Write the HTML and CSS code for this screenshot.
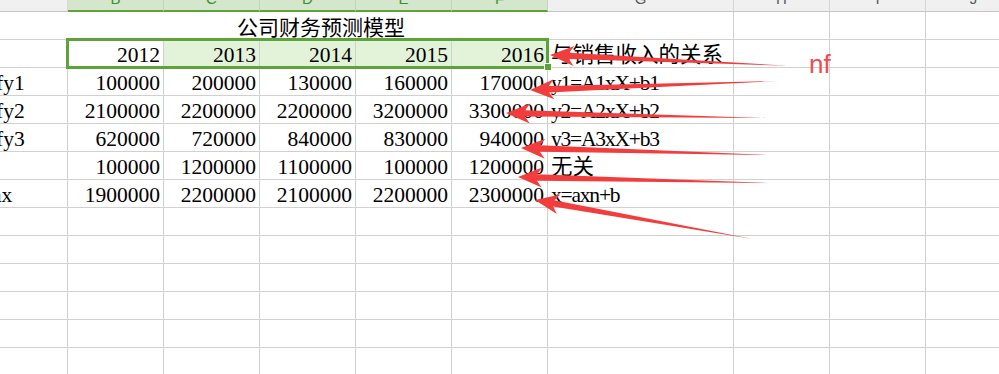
FILE: index.html
```html
<!DOCTYPE html>
<html lang="zh">
<head>
<meta charset="utf-8">
<title>公司财务预测模型</title>
<link rel="stylesheet" href="styles.css">
</head>
<body>
<div class="sheet">
  <div class="grid">
    <div class="hd"></div>
    <div class="hd on"><span>B</span></div>
    <div class="hd on"><span>C</span></div>
    <div class="hd on"><span>D</span></div>
    <div class="hd on"><span>E</span></div>
    <div class="hd on"><span>F</span></div>
    <div class="hd"><span>G</span></div>
    <div class="hd"><span>H</span></div>
    <div class="hd"><span>I</span></div>
    <div class="hd"><span>J</span></div>

    <div class="c title">公司财务预测模型</div>
    <div class="c"></div><div class="c"></div><div class="c"></div>

    <div class="c lab"></div>
    <div class="c num">2012</div>
    <div class="c num hl">2013</div>
    <div class="c num hl">2014</div>
    <div class="c num hl">2015</div>
    <div class="c num hl">2016</div>
    <div class="c txt">与销售收入的关系</div>
    <div class="c"></div><div class="c"></div><div class="c"></div>

    <div class="c lab"><span class="l1">fy1</span></div>
    <div class="c num">100000</div>
    <div class="c num">200000</div>
    <div class="c num">130000</div>
    <div class="c num">160000</div>
    <div class="c num">170000</div>
    <div class="c txt formula">y1=A1xX+b1</div>
    <div class="c"></div><div class="c"></div><div class="c"></div>

    <div class="c lab"><span class="l1">fy2</span></div>
    <div class="c num">2100000</div>
    <div class="c num">2200000</div>
    <div class="c num">2200000</div>
    <div class="c num">3200000</div>
    <div class="c num">3300000</div>
    <div class="c txt formula">y2=A2xX+b2</div>
    <div class="c"></div><div class="c"></div><div class="c"></div>

    <div class="c lab"><span class="l1">fy3</span></div>
    <div class="c num">620000</div>
    <div class="c num">720000</div>
    <div class="c num">840000</div>
    <div class="c num">830000</div>
    <div class="c num">940000</div>
    <div class="c txt formula">y3=A3xX+b3</div>
    <div class="c"></div><div class="c"></div><div class="c"></div>

    <div class="c lab"><span class="l2">目</span></div>
    <div class="c num">100000</div>
    <div class="c num">1200000</div>
    <div class="c num">1100000</div>
    <div class="c num">100000</div>
    <div class="c num">1200000</div>
    <div class="c txt">无关</div>
    <div class="c"></div><div class="c"></div><div class="c"></div>

    <div class="c lab"><span class="l3">ax</span></div>
    <div class="c num">1900000</div>
    <div class="c num">2200000</div>
    <div class="c num">2100000</div>
    <div class="c num">2200000</div>
    <div class="c num">2300000</div>
    <div class="c txt formula">x=axn+b</div>
    <div class="c"></div><div class="c"></div><div class="c"></div>

    <div class="c"></div><div class="c"></div><div class="c"></div><div class="c"></div><div class="c"></div><div class="c"></div><div class="c"></div><div class="c"></div><div class="c"></div><div class="c"></div>
    <div class="c"></div><div class="c"></div><div class="c"></div><div class="c"></div><div class="c"></div><div class="c"></div><div class="c"></div><div class="c"></div><div class="c"></div><div class="c"></div>
    <div class="c"></div><div class="c"></div><div class="c"></div><div class="c"></div><div class="c"></div><div class="c"></div><div class="c"></div><div class="c"></div><div class="c"></div><div class="c"></div>
    <div class="c"></div><div class="c"></div><div class="c"></div><div class="c"></div><div class="c"></div><div class="c"></div><div class="c"></div><div class="c"></div><div class="c"></div><div class="c"></div>
    <div class="c"></div><div class="c"></div><div class="c"></div><div class="c"></div><div class="c"></div><div class="c"></div><div class="c"></div><div class="c"></div><div class="c"></div><div class="c"></div>
    <div class="c"></div><div class="c"></div><div class="c"></div><div class="c"></div><div class="c"></div><div class="c"></div><div class="c"></div><div class="c"></div><div class="c"></div><div class="c"></div>
  </div>

  <div class="selbox"><span class="handle"></span></div>

  <svg class="arrows" width="999" height="374" viewBox="0 0 999 374">
    <g fill="#f33d3d">
      <polygon transform="translate(550,55) rotate(2.6)" points="0,0 24,-10 19,-3.2 238,0 19,3.2 24,10"/>
      <polygon transform="translate(530,90) rotate(-2.07)" points="0,0 24,-10 19,-3.2 249,0 19,3.2 24,10"/>
      <polygon transform="translate(506,113) rotate(1.10)" points="0,0 24,-10 19,-3.2 261,0 19,3.2 24,10"/>
      <polygon transform="translate(521,148) rotate(1.62)" points="0,0 24,-10 19,-3.2 247,0 19,3.2 24,10"/>
      <polygon transform="translate(518,177) rotate(1.37)" points="0,0 24,-10 19,-3.2 250,0 19,3.2 24,10"/>
      <polygon transform="translate(535,200) rotate(10.14)" points="0,0 24,-10 19,-3.2 221,0 19,3.2 24,10"/>
    </g>
  </svg>

  <div class="note">nf</div>
</div>
</body>
</html>
```

FILE: styles.css
```css
html, body {
  margin: 0;
  padding: 0;
  background: #ffffff;
  overflow: hidden;
}

.sheet {
  position: relative;
  width: 999px;
  height: 374px;
  overflow: hidden;
  font-family: "Liberation Serif", "Noto Sans CJK SC", serif;
  font-size: 21.5px;
  color: #000;
}

.grid {
  display: grid;
  grid-template-columns: 68px repeat(5, 96px) 186px 96px 96px 96px;
  grid-template-rows: 12px;
  grid-auto-rows: 28px;
}

.hd {
  box-sizing: border-box;
  background: #f0f0f0;
  border-right: 1px solid #d6d6d6;
  border-bottom: 1px solid #c4c4c4;
  overflow: hidden;
  text-align: center;
  font-family: "Liberation Sans", sans-serif;
  font-size: 15px;
  color: #5a5a5a;
}

.hd span {
  display: block;
  line-height: 20px;
  margin-top: -11px;
}

.hd.on {
  background: #d4e6cc;
  color: #3f8f2f;
  border-right-color: #c3d6bb;
  border-bottom: 2px solid #5ea33a;
}

.c {
  box-sizing: border-box;
  border-right: 1px solid #d0d0d0;
  border-bottom: 1px solid #d0d0d0;
  display: flex;
  align-items: flex-end;
  line-height: 24px;
  white-space: nowrap;
  padding: 0 3px;
  min-width: 0;
}

.num {
  justify-content: flex-end;
}

.hl {
  background: #e3f3d9;
}

.txt {
  justify-content: flex-start;
  padding-left: 3px;
}

.formula {
  letter-spacing: -1.2px;
}

.title {
  grid-column: 1 / span 7;
  align-items: center;
  padding-left: 237px;
  font-family: "Noto Sans CJK SC", sans-serif;
  font-size: 21px;
}

.lab {
  overflow: hidden;
  padding: 0;
}

.lab span {
  display: block;
}

.lab .l1 {
  margin-left: -4px;
}

.lab .l2 {
  margin-left: -19px;
  font-family: "Noto Sans CJK SC", sans-serif;
}

.lab .l3 {
  margin-left: -8px;
}

.selbox {
  position: absolute;
  left: 66px;
  top: 38px;
  width: 483px;
  height: 31px;
  box-sizing: border-box;
  border: 3px solid #5ea33a;
}

.handle {
  position: absolute;
  right: -5px;
  bottom: -4px;
  width: 6px;
  height: 6px;
  background: #5ea33a;
  box-shadow: 0 0 0 1px #ffffff;
}

.arrows {
  position: absolute;
  left: 0;
  top: 0;
  pointer-events: none;
}

.note {
  position: absolute;
  left: 809px;
  top: 49px;
  color: #f24a4e;
  font-family: "Liberation Sans", sans-serif;
  font-size: 26px;
  line-height: 30px;
}
```
